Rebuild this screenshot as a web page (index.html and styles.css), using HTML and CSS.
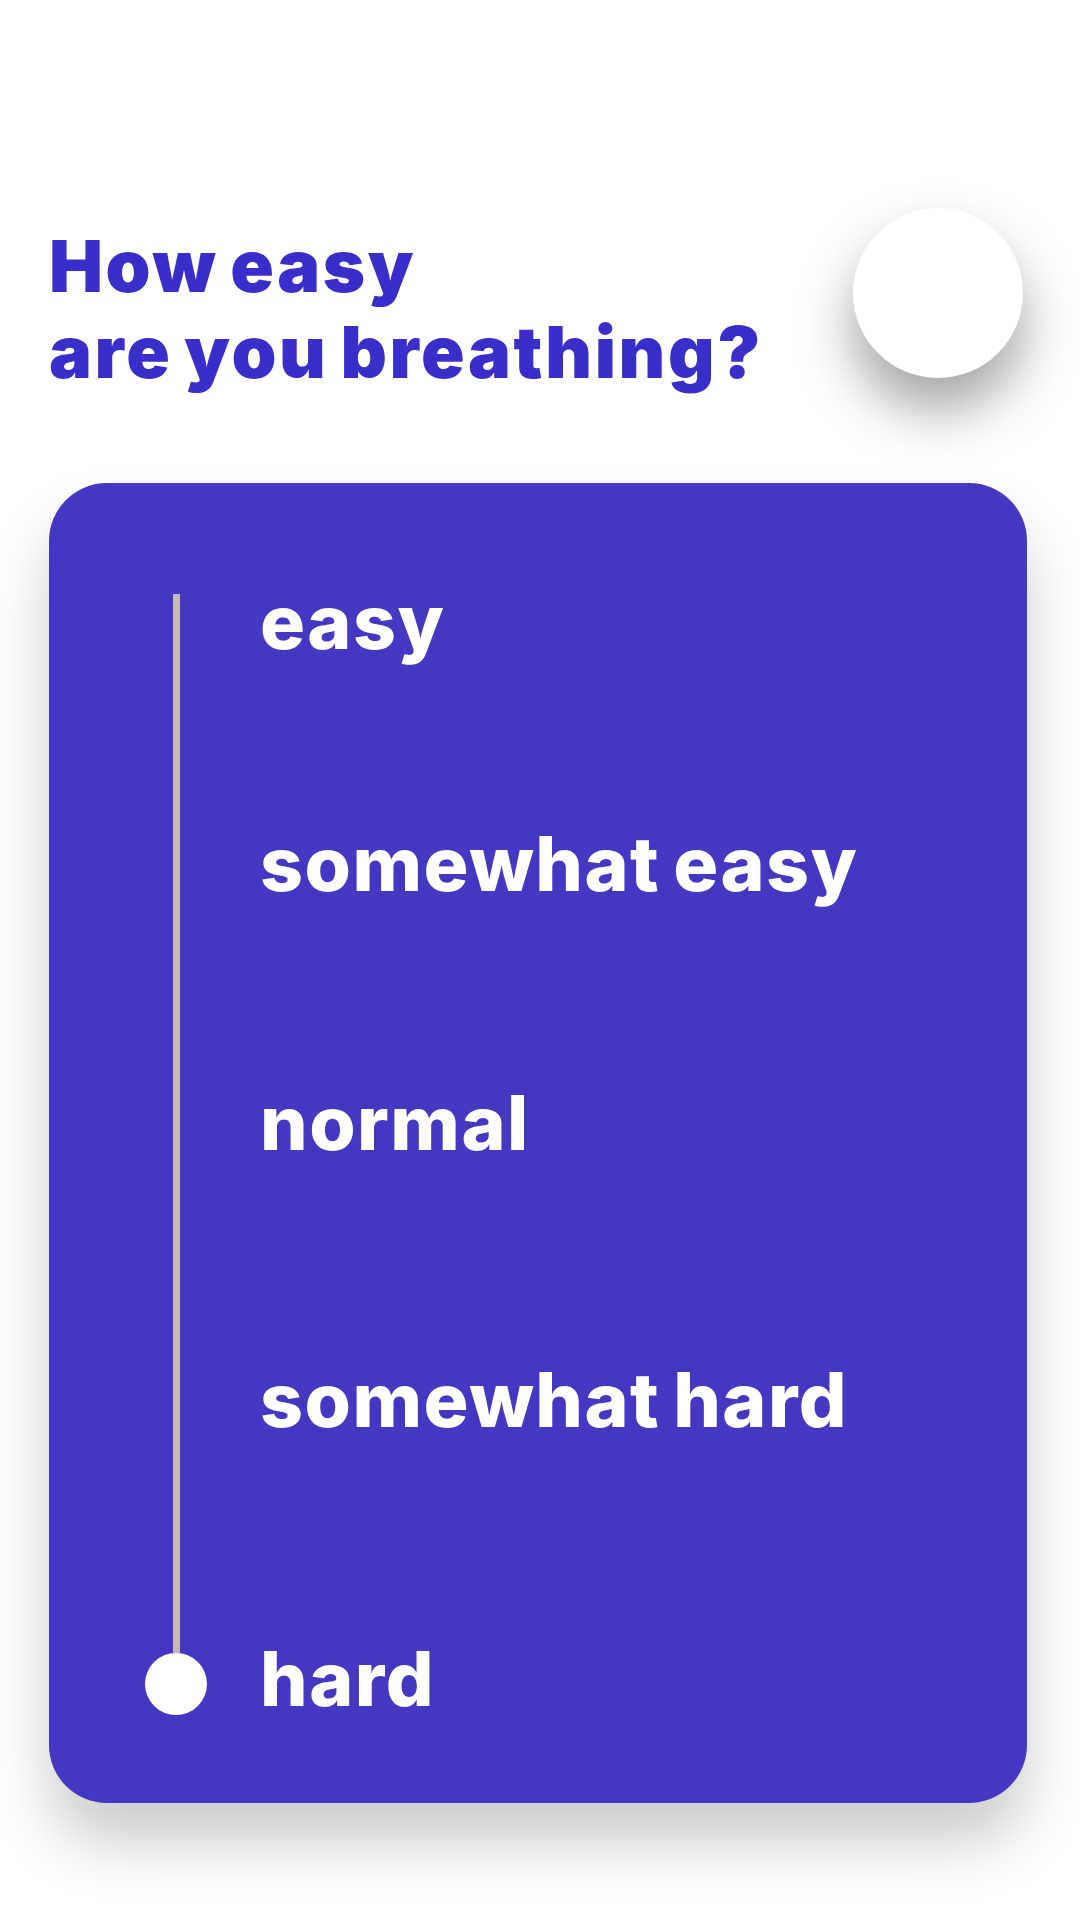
FILE: index.html
```html
<!DOCTYPE html>
<html lang="en">
<head>
<meta charset="utf-8">
<title>Breathing</title>
<link rel="stylesheet" href="styles.css">
</head>
<body>
<div class="page">
  <header class="header">
    <h1 class="title">How easy<br>are you breathing?</h1>
    <div class="avatar"></div>
  </header>
  <section class="card">
    <div class="track">
      <div class="track-line"></div>
      <div class="track-dot"></div>
    </div>
    <ul class="options">
      <li class="option opt-1">easy</li>
      <li class="option opt-2">somewhat easy</li>
      <li class="option opt-3">normal</li>
      <li class="option opt-4">somewhat hard</li>
      <li class="option opt-5">hard</li>
    </ul>
  </section>
</div>
</body>
</html>
```

FILE: styles.css
```css
html, body {
  margin: 0;
  padding: 0;
  background: #ffffff;
}

.page {
  width: 1080px;
  height: 1920px;
  overflow: hidden;
  font-family: Inter, "Liberation Sans", sans-serif;
}

.header {
  display: flex;
  justify-content: space-between;
  align-items: flex-start;
  padding: 208px 57px 0 49px;
}

.title {
  margin: 15px 0 0 0;
  font-size: 72px;
  line-height: 86.4px;
  font-weight: 900;
  letter-spacing: 2.6px;
  word-spacing: -5px;
  color: #3a2ecb;
}

.avatar {
  width: 170px;
  height: 170px;
  border-radius: 50%;
  background: #ffffff;
  box-shadow: 0 32px 55px rgba(0, 0, 0, 0.36);
}

.card {
  margin: 87px 0 0 49px;
  width: 978px;
  height: 1320px;
  box-sizing: border-box;
  padding: 103px 0 0 96px;
  border-radius: 58px;
  background: #4437c1;
  box-shadow: 0 40px 60px rgba(0, 0, 0, 0.2);
  display: grid;
  grid-template-columns: 62px 1fr;
  column-gap: 53px;
  align-items: start;
}

.track {
  margin-top: 8px;
  height: 1121px;
  display: flex;
  flex-direction: column;
  align-items: center;
}

.track-line {
  flex: 1;
  width: 7px;
  background: #c4b8b8;
}

.track-dot {
  width: 62px;
  height: 62px;
  border-radius: 50%;
  background: #ffffff;
}

.options {
  list-style: none;
  margin: 0;
  padding: 0;
  display: flex;
  flex-direction: column;
}

.option {
  font-size: 75px;
  line-height: 72px;
  height: 72px;
  font-weight: 800;
  letter-spacing: 1.5px;
  word-spacing: -5px;
  color: #ffffff;
  white-space: nowrap;
}

.opt-2 { margin-top: 170px; }
.opt-3 { margin-top: 187px; }
.opt-4 { margin-top: 205px; }
.opt-5 { margin-top: 207px; }
```
